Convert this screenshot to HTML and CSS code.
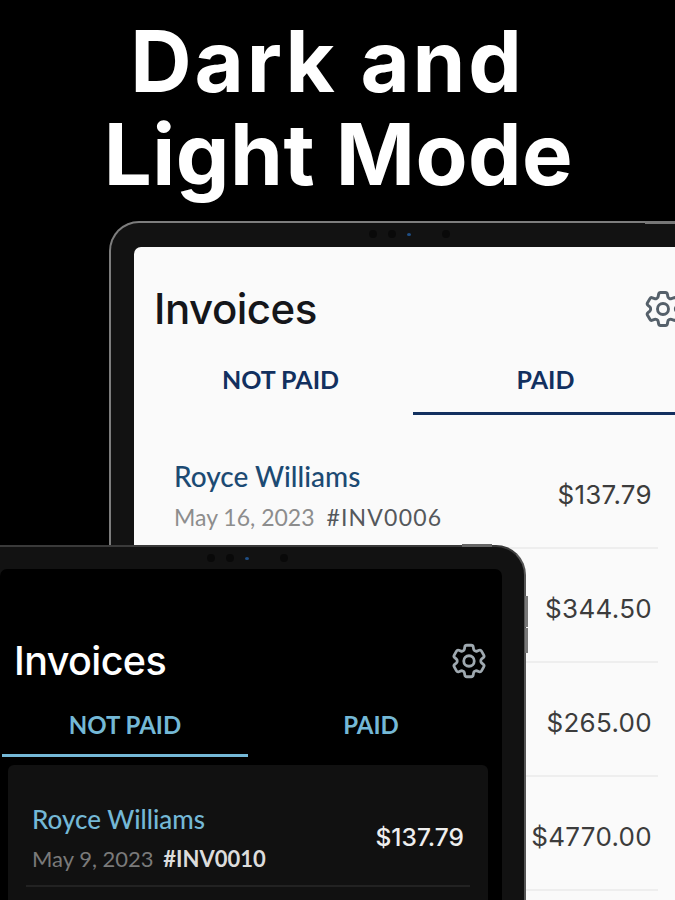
FILE: index.html
```html
<!DOCTYPE html>
<html>
<head>
    <title>Dark and Light Mode</title>
    <meta charset="UTF-8">
    <meta name="viewport" content="width=device-width, initial-scale=1.0">
    <link rel="stylesheet" href="styles.css">
</head>
<body>
    <main class="stage">
        <h1 class="headline">
            <span class="headline-top">Dark and</span>
            <span class="headline-bottom">Light Mode</span>
        </h1>

        <!-- Light tablet, sits behind the dark one -->
        <section class="tablet tablet-light">
            <div class="edge-button edge-top"></div>
            <div class="cameras">
                <span class="cam"></span><span class="cam"></span><span class="cam cam-blue"></span><span class="cam cam-far"></span>
            </div>
            <div class="screen">
                <header class="screen-header">
                    <h2>Invoices</h2>
                    <svg class="gear" viewBox="0 0 24 24"><use href="#gear-icon"/></svg>
                </header>
                <nav class="tabs">
                    <div class="tab">NOT PAID</div>
                    <div class="tab active">PAID</div>
                </nav>
                <div class="invoice-list">
                    <div class="invoice">
                        <div class="invoice-info">
                            <div class="client">Royce Williams</div>
                            <div class="meta">May 16, 2023 <span class="ref">#INV0006</span></div>
                        </div>
                        <div class="amount">$137.79</div>
                    </div>
                    <div class="invoice"><div class="amount">$344.50</div></div>
                    <div class="invoice"><div class="amount">$265.00</div></div>
                    <div class="invoice"><div class="amount">$4770.00</div></div>
                </div>
            </div>
        </section>

        <!-- Dark tablet -->
        <section class="tablet tablet-dark">
            <div class="edge-button edge-top"></div>
            <div class="edge-button edge-side-a"></div>
            <div class="edge-button edge-side-b"></div>
            <div class="cameras">
                <span class="cam"></span><span class="cam"></span><span class="cam cam-blue"></span><span class="cam cam-far"></span>
            </div>
            <div class="screen">
                <header class="screen-header">
                    <h2>Invoices</h2>
                    <svg class="gear" viewBox="0 0 24 24"><use href="#gear-icon"/></svg>
                </header>
                <nav class="tabs">
                    <div class="tab active">NOT PAID</div>
                    <div class="tab">PAID</div>
                </nav>
                <div class="invoice-list">
                    <div class="invoice">
                        <div class="invoice-info">
                            <div class="client">Royce Williams</div>
                            <div class="meta">May 9, 2023 <span class="ref">#INV0010</span></div>
                        </div>
                        <div class="amount">$137.79</div>
                    </div>
                </div>
            </div>
        </section>

        <svg class="icon-defs" width="0" height="0">
            <symbol id="gear-icon" viewBox="0 0 24 24">
                <path fill="none" stroke="currentColor" stroke-width="1.6" stroke-linejoin="round" d="M9.594 3.94c.09-.542.56-.94 1.11-.94h2.593c.55 0 1.02.398 1.11.94l.213 1.281c.063.374.313.686.645.87.074.04.147.083.22.127.324.196.72.257 1.075.124l1.217-.456a1.125 1.125 0 011.37.49l1.296 2.247a1.125 1.125 0 01-.26 1.431l-1.003.827c-.293.24-.438.613-.431.992a6.759 6.759 0 010 .255c-.007.378.138.75.43.99l1.005.828c.424.35.534.954.26 1.43l-1.298 2.247a1.125 1.125 0 01-1.369.491l-1.217-.456c-.355-.133-.75-.072-1.076.124a6.57 6.57 0 01-.22.128c-.331.183-.581.495-.644.869l-.213 1.28c-.09.543-.56.941-1.11.941h-2.594c-.55 0-1.02-.398-1.11-.94l-.213-1.281c-.062-.374-.312-.686-.644-.87a6.52 6.52 0 01-.22-.127c-.325-.196-.72-.257-1.076-.124l-1.217.456a1.125 1.125 0 01-1.369-.49l-1.297-2.247a1.125 1.125 0 01.26-1.431l1.004-.827c.292-.24.437-.613.43-.992a6.932 6.932 0 010-.255c.007-.378-.138-.75-.43-.99l-1.004-.828a1.125 1.125 0 01-.26-1.43l1.297-2.247a1.125 1.125 0 011.37-.491l1.216.456c.356.133.751.072 1.076-.124.072-.044.146-.087.22-.128.332-.183.582-.495.644-.869l.214-1.281z"/>
                <circle cx="12" cy="12" r="3" fill="none" stroke="currentColor" stroke-width="1.6"/>
            </symbol>
        </svg>
    </main>
</body>
</html>
```

FILE: styles.css
```css
/* Store screenshot: two overlapping tablets */
:root {
    --navy: #12305f;
    --sky: #74b8d6;
    --bezel: #121212;
    --edge: #7d7d7d;
}

* { margin: 0; padding: 0; box-sizing: border-box; }

body {
    background: #000;
    font-family: "Lato", "Noto Sans", sans-serif;
}

.stage {
    position: relative;
    width: 675px;
    height: 900px;
    overflow: hidden;
    background: #000;
}

.headline {
    display: flex;
    flex-direction: column;
    align-items: center;
    padding-top: 15px;
    color: #fff;
    font-family: "Inter", sans-serif;
    font-size: 85px;
    font-weight: 700;
    line-height: 93px;
}

.headline-top { margin-left: -20px; letter-spacing: 2.8px; }
.headline-bottom { margin-left: 2px; letter-spacing: 0.5px; }

.icon-defs { position: absolute; }

/* tablets are free items on the canvas */
.tablet {
    position: absolute;
    background: var(--bezel);
    border: 2px solid var(--edge);
    border-radius: 30px 30px 0 0;
    border-bottom: none;
}

.tablet-light {
    left: 109px;
    top: 221px;
    width: 620px;
    height: 760px;
    padding: 24px 0 0 23px;
}

.tablet-dark {
    left: -30px;
    top: 545px;
    width: 556px;
    height: 400px;
    padding: 22px 22px 0 28px;
    border-color: #3a3a3a;
    border-right-color: #555;
}

.screen {
    height: 100%;
    border-radius: 7px 7px 0 0;
}

.tablet-light .screen {
    background: #fafafa;
    padding-left: 14px;
}

.tablet-dark .screen {
    background: #000;
}

.edge-button {
    position: absolute;
    background: #777;
}

.tablet-light .edge-top { top: -2px; left: 534px; width: 40px; height: 3px; }
.tablet-dark .edge-top { top: -3px; left: 490px; width: 30px; height: 3px; background: #666; }
.edge-side-a { top: 49px; right: -4px; width: 3px; height: 31px; }
.edge-side-b { top: 81px; right: -4px; width: 3px; height: 25px; }

.cameras {
    position: absolute;
    top: 7px;
    display: flex;
    align-items: center;
    gap: 11px;
}

.tablet-light .cameras { left: 258px; }
.tablet-dark .cameras { left: 235px; }

.cam {
    width: 8px;
    height: 8px;
    border-radius: 50%;
    background: #090909;
}

.cam-blue {
    width: 4px;
    height: 3px;
    background: #1f4f86;
}

.cam-far { margin-left: 20px; }

.screen-header {
    display: flex;
    justify-content: space-between;
    align-items: center;
}

.screen-header h2 {
    font-family: "Inter", sans-serif;
    font-weight: 500;
}

.gear { flex: none; }

.tablet-light .screen-header {
    height: 90px;
    padding: 33px 0 0 6px;
    width: 537px;
}

.tablet-light h2 {
    color: #15161a;
    font-size: 42px;
    letter-spacing: -0.5px;
}

.tablet-light .gear {
    width: 44px;
    height: 44px;
    color: #55606a;
}

.tablet-dark .screen-header {
    height: 118px;
    padding: 66px 12px 0 14px;
}

.tablet-dark h2 {
    color: #fff;
    font-size: 39.5px;
    letter-spacing: -0.6px;
}

.tablet-dark .gear {
    width: 42px;
    height: 42px;
    color: #9fa9b0;
}

.tabs {
    display: flex;
}

.tab {
    text-align: center;
    font-weight: 700;
    border-bottom: 2px solid transparent;
}

.tablet-light .tab {
    width: 265px;
    height: 78px;
    padding-top: 27px;
    font-size: 25px;
    color: var(--navy);
}

.tablet-light .tab.active { border-bottom: 3px solid var(--navy); }

.tablet-dark .tabs { padding-left: 2px; }

.tablet-dark .tab {
    width: 246px;
    height: 70px;
    padding-top: 23px;
    font-size: 24px;
    color: var(--sky);
}

.tablet-dark .tab.active { border-bottom: 3px solid var(--sky); }

.invoice {
    display: flex;
    justify-content: space-between;
    align-items: center;
}

.tablet-light .invoice-list {
    width: 510px;
}

.tablet-light .invoice {
    height: 114px;
    padding: 6px 6px 0 26px;
    border-bottom: 2px solid #eeeeee;
}

.tablet-light .invoice:first-child { height: 134px; padding-top: 27px; }

.tablet-light .invoice .amount { margin-left: auto; }

.client { font-weight: 500; }
.meta { margin-top: 10px; }

.tablet-light .client { color: #1c4a73; font-size: 28px; }
.tablet-light .meta { color: #8d8d8d; font-size: 23px; }
.tablet-light .ref { color: #55585c; margin-left: 6px; letter-spacing: 1.2px; }

.amount { font-family: "Inter", sans-serif; }

.tablet-light .amount { color: #3c3c3c; font-size: 26px; letter-spacing: 0.3px; }

.tablet-dark .invoice-list {
    margin: 8px 14px 0 8px;
    padding: 0 18px;
    background: #111;
    border-radius: 6px 6px 0 0;
    height: 200px;
}

.tablet-dark .invoice {
    height: 122px;
    padding: 24px 6px 0 6px;
    border-bottom: 2px solid #222;
}

.tablet-dark .client { color: var(--sky); font-size: 26px; }
.tablet-dark .meta { color: #7a7a7a; font-size: 22px; }
.tablet-dark .ref { color: #dcdcdc; margin-left: 4px; font-weight: 700; }
.tablet-dark .amount { color: #eee; font-size: 24.5px; font-weight: 500; }
```
